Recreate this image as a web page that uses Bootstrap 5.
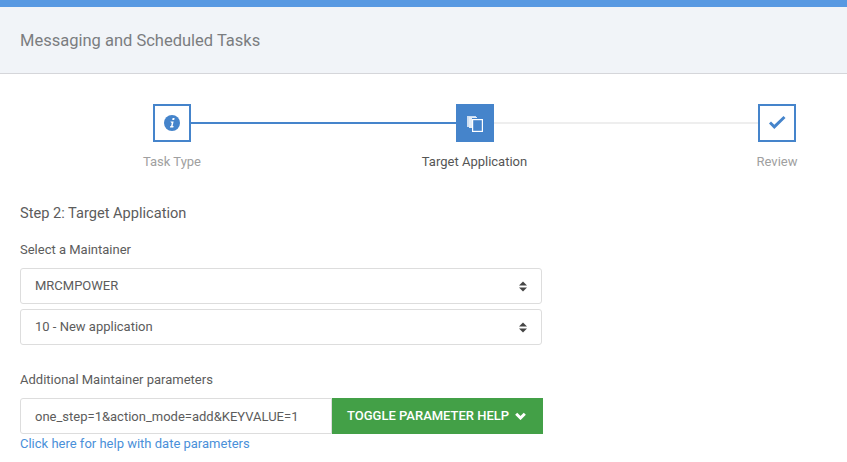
<!DOCTYPE html>
<html lang="en">
<head>
<meta charset="utf-8">
<title>Messaging and Scheduled Tasks</title>
<link href="https://cdn.jsdelivr.net/npm/bootstrap@5.3.0/dist/css/bootstrap.min.css" rel="stylesheet">
<style>
html,body{height:462px;overflow:hidden}
body{font-family:Roboto,"Liberation Sans",sans-serif;font-size:13px;color:#444;background:#fff}
.topstrip{height:7px;background:#5899e2}
.pagehead{height:67px;background:#f1f4f8;border-bottom:1px solid #d5d6da;padding-left:20px;padding-top:3px;color:#7b7d80;font-size:16.500px}
.track{margin:30px 51px 0 153px}
.stepbox{width:38px;height:38px;border:2px solid #4584cb;color:#4584cb;background:#fff}
.stepbox.current{background:#4584cb;color:#fff}
.stepline{height:2px;background:#eeeeee}
.stepline.done{background:#4584cb}
.steplabels{margin:12px 20px 0 122px;line-height:16px}
.steplabel{width:100px;text-align:center;color:#a0a0a0;white-space:nowrap;display:flex;justify-content:center}
.steplabel.current{color:#555}
.formarea{padding:0 20px;margin-top:33px;width:563px}
.stephead{font-size:14.600px;line-height:20px;margin-bottom:19px;color:#5c5c5c}
.fieldlabel{line-height:16px;margin-bottom:10px;color:#5c5c5c}
.formarea .form-select,.formarea .form-control{height:36px;font-size:13px;color:#5c5c5c;padding:0 14px;border-color:#ddd;border-radius:3px;box-shadow:none}
.formarea .form-select{width:522px;background-image:url("data:image/svg+xml,%3csvg xmlns='http://www.w3.org/2000/svg' width='8' height='11'%3e%3cpath fill='%23444' d='M0 4.4 4 .4l4 4zM0 6.6l4 4 4-4z'/%3e%3c/svg%3e");background-size:8px 11px;background-position:right 14px center;margin-bottom:5px}
.formarea .form-select:last-of-type{margin-bottom:0}
.paramgroup{margin-top:27px}
.formarea .input-group .togglebtn{background:#43a047;color:#fff;border:0;border-radius:0;height:36px;width:211px;font-size:13px;font-weight:500;padding:0 0 0 15px;gap:6px}
.formarea .paraminput{width:312px;flex:none;border-radius:3px 0 0 3px}
.helplink{color:#4a90d9;text-decoration:none;line-height:20px;display:block}
</style>
</head>
<body>
<div class="topstrip"></div>
<div class="pagehead d-flex align-items-center">Messaging and Scheduled Tasks</div>

<div class="track d-flex align-items-center">
  <div class="stepbox d-flex align-items-center justify-content-center flex-shrink-0">
    <svg width="16" height="16" viewBox="0 0 16 16" aria-hidden="true"><circle cx="8" cy="8" r="8" fill="currentColor"/><path fill="#fff" d="M8.6 2.900h2l-.4 2h-2zM6.400 6.400h3.200L8.600 11h1l-.3 1.400H6l.3-1.400h.8l.7-3.200h-.7z"/></svg>
  </div>
  <div class="stepline done flex-grow-1"></div>
  <div class="stepbox current d-flex align-items-center justify-content-center flex-shrink-0">
    <svg width="16" height="17" viewBox="0 0 16 17" aria-hidden="true"><path fill="#cfdff2" d="M0 1h9v2H5v10H2v-1H0z"/><path fill="#e3edf8" d="M2 2h8v1H5v10H2z"/><rect x="5.600" y="4.600" width="9.800" height="11.800" fill="#4584cb" stroke="#fff" stroke-width="1.200"/></svg>
  </div>
  <div class="stepline flex-grow-1"></div>
  <div class="stepbox d-flex align-items-center justify-content-center flex-shrink-0">
    <svg width="18" height="16" viewBox="0 0 18 16" aria-hidden="true"><path fill="currentColor" d="M1 8.500 3 6.500l3.300 3.300L15.500 1l2 2L6.300 14z"/></svg>
  </div>
</div>
<div class="steplabels d-flex justify-content-between">
  <div class="steplabel">Task Type</div>
  <div class="steplabel current">Target Application</div>
  <div class="steplabel">Review</div>
</div>

<form class="formarea">
  <div class="stephead">Step 2: Target Application</div>
  <div class="fieldlabel">Select a Maintainer</div>
  <select class="form-select"><option>MRCMPOWER</option></select>
  <select class="form-select"><option>10 - New application</option></select>
  <div class="paramgroup">
    <div class="fieldlabel">Additional Maintainer parameters</div>
    <div class="input-group flex-nowrap">
      <input class="form-control paraminput" type="text" value="one_step=1&amp;action_mode=add&amp;KEYVALUE=1">
      <button class="btn togglebtn d-flex align-items-center ms-0" type="button">TOGGLE PARAMETER HELP
        <svg width="11" height="8" viewBox="0 0 11 8" aria-hidden="true"><path fill="none" stroke="#fff" stroke-width="3" d="M1.200 1.800 5.500 6l4.300-4.200"/></svg>
      </button>
    </div>
    <a class="helplink" href="#">Click here for help with date parameters</a>
  </div>
</form>
<script src="https://cdn.jsdelivr.net/npm/bootstrap@5.3.0/dist/js/bootstrap.bundle.min.js"></script>
</body>
</html>
